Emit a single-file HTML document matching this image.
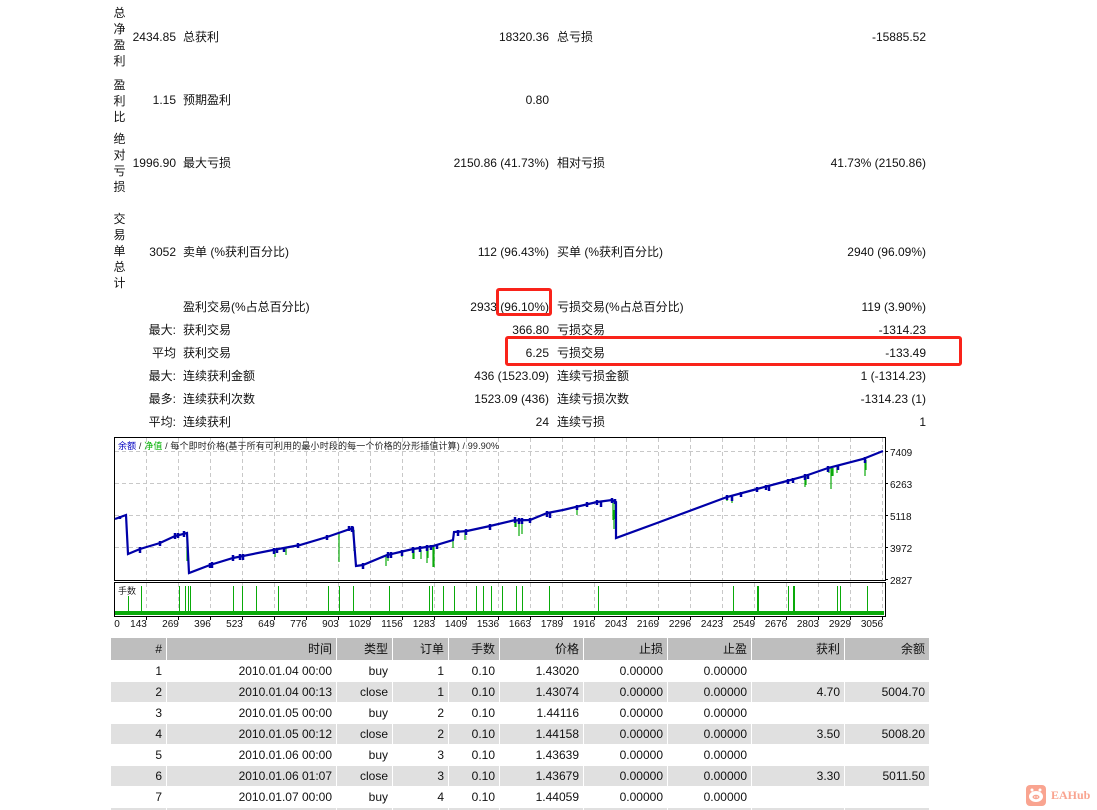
<!DOCTYPE html>
<html lang="zh">
<head>
<meta charset="utf-8">
<title>Report</title>
<style>
html,body{margin:0;padding:0;background:#fff;}
body{width:1097px;height:810px;overflow:hidden;position:relative;font:12px/16px "Liberation Sans","Noto Sans CJK SC",sans-serif;color:#111;}
.t{position:absolute;white-space:nowrap;height:16px;line-height:16px;}
.r{text-align:right;}
.v{position:absolute;width:14px;left:112.5px;text-align:center;line-height:16px;}
.box{position:absolute;border:3px solid #f9231a;border-radius:3px;box-sizing:border-box;}
svg{position:absolute;left:0;top:0;}
.c{position:absolute;height:20px;line-height:21px;text-align:right;box-sizing:border-box;padding-right:4px;white-space:nowrap;}
.hb{background:#bebebe;height:22px;line-height:23px;}
.gb{background:#e0e0e0;}
.wm{position:absolute;left:1051px;top:786px;font:bold 12px/18px "Liberation Serif",serif;color:#f9a490;}
</style>
</head>
<body>
<!-- summary -->
<div class="v" style="top:5px">总<br>净<br>盈<br>利</div>
<div class="t r" style="right:921px;top:29px">2434.85</div><div class="t" style="left:183px;top:29px">总获利</div><div class="t r" style="right:548px;top:29px">18320.36</div><div class="t" style="left:557px;top:29px">总亏损</div><div class="t r" style="right:171px;top:29px">-15885.52</div>
<div class="v" style="top:77px">盈<br>利<br>比</div>
<div class="t r" style="right:921px;top:92px">1.15</div><div class="t" style="left:183px;top:92px">预期盈利</div><div class="t r" style="right:548px;top:92px">0.80</div>
<div class="v" style="top:131px">绝<br>对<br>亏<br>损</div>
<div class="t r" style="right:921px;top:155px">1996.90</div><div class="t" style="left:183px;top:155px">最大亏损</div><div class="t r" style="right:548px;top:155px">2150.86 (41.73%)</div><div class="t" style="left:557px;top:155px">相对亏损</div><div class="t r" style="right:171px;top:155px">41.73% (2150.86)</div>
<div class="v" style="top:211px">交<br>易<br>单<br>总<br>计</div>
<div class="t r" style="right:921px;top:244px">3052</div><div class="t" style="left:183px;top:244px">卖单 (%获利百分比)</div><div class="t r" style="right:548px;top:244px">112 (96.43%)</div><div class="t" style="left:557px;top:244px">买单 (%获利百分比)</div><div class="t r" style="right:171px;top:244px">2940 (96.09%)</div>
<div class="t" style="left:183px;top:299px">盈利交易(%占总百分比)</div><div class="t r" style="right:548px;top:299px">2933 (96.10%)</div><div class="t" style="left:557px;top:299px">亏损交易(%占总百分比)</div><div class="t r" style="right:171px;top:299px">119 (3.90%)</div>
<div class="t r" style="right:921px;top:322px">最大:</div><div class="t" style="left:183px;top:322px">获利交易</div><div class="t r" style="right:548px;top:322px">366.80</div><div class="t" style="left:557px;top:322px">亏损交易</div><div class="t r" style="right:171px;top:322px">-1314.23</div>
<div class="t r" style="right:921px;top:345px">平均</div><div class="t" style="left:183px;top:345px">获利交易</div><div class="t r" style="right:548px;top:345px">6.25</div><div class="t" style="left:557px;top:345px">亏损交易</div><div class="t r" style="right:171px;top:345px">-133.49</div>
<div class="t r" style="right:921px;top:368px">最大:</div><div class="t" style="left:183px;top:368px">连续获利金额</div><div class="t r" style="right:548px;top:368px">436 (1523.09)</div><div class="t" style="left:557px;top:368px">连续亏损金额</div><div class="t r" style="right:171px;top:368px">1 (-1314.23)</div>
<div class="t r" style="right:921px;top:391px">最多:</div><div class="t" style="left:183px;top:391px">连续获利次数</div><div class="t r" style="right:548px;top:391px">1523.09 (436)</div><div class="t" style="left:557px;top:391px">连续亏损次数</div><div class="t r" style="right:171px;top:391px">-1314.23 (1)</div>
<div class="t r" style="right:921px;top:414px">平均:</div><div class="t" style="left:183px;top:414px">连续获利</div><div class="t r" style="right:548px;top:414px">24</div><div class="t" style="left:557px;top:414px">连续亏损</div><div class="t r" style="right:171px;top:414px">1</div>

<div class="box" style="left:496px;top:288px;width:56px;height:28px"></div>
<div class="box" style="left:505px;top:336px;width:457px;height:30px"></div>

<!-- chart -->
<svg width="1097" height="640" viewBox="0 0 1097 640" font-family="'Liberation Sans','Noto Sans CJK SC',sans-serif">
<g stroke="#c8c8c8" stroke-width="1" stroke-dasharray="4 3" fill="none" shape-rendering="crispEdges">
<path d="M115 451.5H884M115 483.5H884M115 515.5H884M115 547.5H884"/>
<path d="M146.500 438V580M178.500 438V580M210.500 438V580M242.500 438V580M274.500 438V580M306.500 438V580M338.500 438V580M370.500 438V580M402.500 438V580M434.500 438V580M466.500 438V580M498.500 438V580M530.500 438V580M562.500 438V580M594.500 438V580M626.500 438V580M658.500 438V580M690.500 438V580M722.500 438V580M754.500 438V580M786.500 438V580M818.500 438V580M850.500 438V580M882.500 438V580"/>
<path d="M146.500 583V611M178.500 583V611M210.500 583V611M242.500 583V611M274.500 583V611M306.500 583V611M338.500 583V611M370.500 583V611M402.500 583V611M434.500 583V611M466.500 583V611M498.500 583V611M530.500 583V611M562.500 583V611M594.500 583V611M626.500 583V611M658.500 583V611M690.500 583V611M722.500 583V611M754.500 583V611M786.500 583V611M818.500 583V611M850.500 583V611M882.500 583V611"/>
</g>
<rect x="114.500" y="437.500" width="771" height="143" fill="none" stroke="#000" shape-rendering="crispEdges"/>
<rect x="114.500" y="582.500" width="771" height="34" fill="none" stroke="#000" shape-rendering="crispEdges"/>
<!-- equity spikes -->
<g stroke="#0aaa0a" stroke-width="1.200" fill="none">
<path d="M187 533V561M275 550V557M286 548V555M339 533V562M354 530V551M386 555V566M388 555V561M402 552V557M413 550V559M414 550V559M421 550V559M427 548V563M428 548V558M433 547V567M434 547V567M453 540V548M465 532V540M516 521V527"/>
<path d="M515 521V527M519 521V536M522 521V534M577 507V515M550 513V517M613 500V520M614 510V529M615 502V519M727 497V501M732 497V503M805 477V487M806 477V485M829 468V473M831 468V489M832 468V476M833 468V476M837 467V473M865 460V476M866 460V470"/>
</g>
<!-- balance -->
<polyline fill="none" stroke="#0000a8" stroke-width="2.200" stroke-linejoin="miter" points="115,519 126,515 128,554 140,549 160,543 175,536 187,533 189,573 210,565 233,558 273,550 300,545 327,537 353,528 356,566 363,565 387,555 413,549 433,546 453,540 454,532 467,531 490,526 513,520.500 530,520 547,513 563,510 597,502 612,500 616,502 616,538 657,523 727,497 757,489 787,481 805,476 828,468 863,459 883,451"/>
<g stroke="#0000a8" stroke-width="2.500" fill="none">
<path d="M120 516V519M140 547V553M160 541V546M175 533V539M178 533V538M184 531V537M210 563V568M212 562V568M233 555V561M240 554V560M243 554V560M274 548V554M277 548V553M284 547V552M298 543V548M327 535V540M349 526V531M352 526V532M363 563V569M388 552V558M391 552V558M402 550V556M413 547V553M420 546V552M427 545V551M431 545V550M437 544V549M458 530V536M466 529V535M490 524V530M515 517V523M519 518V524M522 518V524M530 518V523M547 511V517M550 512V518M577 505V510M587 502V507M597 500V505M601 502V507M612 498V503M615 499V504M727 495V500M732 495V501M741 492V497M757 487V492M766 485V490M769 485V491M788 479V484M793 478V483M805 474V480M808 474V479M828 466V472M838 465V470M865 457V463"/>
</g>
<!-- lots -->
<g fill="#0aaa0a" shape-rendering="crispEdges">
<rect x="115" y="611" width="769" height="4"/>
<rect x="128" y="596" width="1" height="15"/><rect x="141" y="586" width="1" height="25"/><rect x="179" y="586" width="1" height="25"/><rect x="185" y="586" width="1" height="25"/><rect x="188" y="586" width="1" height="25"/><rect x="190" y="586" width="1" height="25"/><rect x="233" y="586" width="1" height="25"/><rect x="242" y="586" width="1" height="25"/><rect x="256" y="586" width="1" height="25"/><rect x="278" y="586" width="1" height="25"/><rect x="328" y="586" width="1" height="25"/><rect x="339" y="586" width="1" height="25"/><rect x="353" y="586" width="1" height="25"/><rect x="389" y="586" width="1" height="25"/><rect x="429" y="586" width="1" height="25"/><rect x="432" y="586" width="1" height="25"/><rect x="443" y="586" width="1" height="25"/><rect x="454" y="586" width="1" height="25"/><rect x="476" y="586" width="1" height="25"/><rect x="483" y="586" width="1" height="25"/><rect x="491" y="586" width="1" height="25"/><rect x="502" y="586" width="1" height="25"/><rect x="516" y="586" width="1" height="25"/><rect x="522" y="586" width="1" height="25"/><rect x="549" y="586" width="1" height="25"/><rect x="598" y="586" width="1" height="25"/><rect x="733" y="586" width="1" height="25"/><rect x="757" y="586" width="2" height="25"/><rect x="788" y="586" width="1" height="25"/><rect x="793" y="586" width="2" height="25"/><rect x="837" y="586" width="1" height="25"/><rect x="840" y="586" width="1" height="25"/><rect x="867" y="586" width="1" height="25"/>
</g>
<path d="M885 451.500H888M885 483.500H888M885 515.500H888M885 547.500H888M885 579.500H888M146.500 617V620M178.500 617V620M210.500 617V620M242.500 617V620M274.500 617V620M306.500 617V620M338.500 617V620M370.500 617V620M402.500 617V620M434.500 617V620M466.500 617V620M498.500 617V620M530.500 617V620M562.500 617V620M594.500 617V620M626.500 617V620M658.500 617V620M690.500 617V620M722.500 617V620M754.500 617V620M786.500 617V620M818.500 617V620M850.500 617V620M882.500 617V620" stroke="#000" fill="none" shape-rendering="crispEdges"/>
<text x="118" y="449" font-size="9" textLength="381" lengthAdjust="spacing" fill="#222"><tspan fill="#0000c0">余额</tspan> / <tspan fill="#00b000">净值</tspan> / 每个即时价格(基于所有可利用的最小时段的每一个价格的分形插值计算) / 99.90%</text>
<text x="118" y="594" font-size="9" fill="#222">手数</text>
<g font-size="10" fill="#111">
<text x="890" y="456">7409</text><text x="890" y="488">6263</text><text x="890" y="520">5118</text><text x="890" y="552">3972</text><text x="890" y="584">2827</text>
</g>
<g font-size="10" fill="#111" text-anchor="middle">
<text x="117" y="627">0</text><text x="138.500" y="627">143</text><text x="170.500" y="627">269</text><text x="202.500" y="627">396</text><text x="234.500" y="627">523</text><text x="266.500" y="627">649</text><text x="298.500" y="627">776</text><text x="330.500" y="627">903</text><text x="360" y="627">1029</text><text x="392" y="627">1156</text><text x="424" y="627">1283</text><text x="456" y="627">1409</text><text x="488" y="627">1536</text><text x="520" y="627">1663</text><text x="552" y="627">1789</text><text x="584" y="627">1916</text><text x="616" y="627">2043</text><text x="648" y="627">2169</text><text x="680" y="627">2296</text><text x="712" y="627">2423</text><text x="744" y="627">2549</text><text x="776" y="627">2676</text><text x="808" y="627">2803</text><text x="840" y="627">2929</text><text x="872" y="627">3056</text>
</g>
</svg>

<!-- table header -->
<div class="c hb" style="left:111px;top:638px;width:55px">#</div><div class="c hb" style="left:167px;top:638px;width:169px">时间</div><div class="c hb" style="left:337px;top:638px;width:55px">类型</div><div class="c hb" style="left:393px;top:638px;width:55px">订单</div><div class="c hb" style="left:449px;top:638px;width:50px">手数</div><div class="c hb" style="left:500px;top:638px;width:83px">价格</div><div class="c hb" style="left:584px;top:638px;width:83px">止损</div><div class="c hb" style="left:668px;top:638px;width:83px">止盈</div><div class="c hb" style="left:752px;top:638px;width:92px">获利</div><div class="c hb" style="left:845px;top:638px;width:84px">余额</div>
<!-- row 1 -->
<div class="c" style="left:111px;top:661px;width:55px">1</div><div class="c" style="left:167px;top:661px;width:169px">2010.01.04 00:00</div><div class="c" style="left:337px;top:661px;width:55px">buy</div><div class="c" style="left:393px;top:661px;width:55px">1</div><div class="c" style="left:449px;top:661px;width:50px">0.10</div><div class="c" style="left:500px;top:661px;width:83px">1.43020</div><div class="c" style="left:584px;top:661px;width:83px">0.00000</div><div class="c" style="left:668px;top:661px;width:83px">0.00000</div>
<!-- row 2 -->
<div class="c gb" style="left:111px;top:682px;width:55px">2</div><div class="c gb" style="left:167px;top:682px;width:169px">2010.01.04 00:13</div><div class="c gb" style="left:337px;top:682px;width:55px">close</div><div class="c gb" style="left:393px;top:682px;width:55px">1</div><div class="c gb" style="left:449px;top:682px;width:50px">0.10</div><div class="c gb" style="left:500px;top:682px;width:83px">1.43074</div><div class="c gb" style="left:584px;top:682px;width:83px">0.00000</div><div class="c gb" style="left:668px;top:682px;width:83px">0.00000</div><div class="c gb" style="left:752px;top:682px;width:92px">4.70</div><div class="c gb" style="left:845px;top:682px;width:84px">5004.70</div>
<!-- row 3 -->
<div class="c" style="left:111px;top:703px;width:55px">3</div><div class="c" style="left:167px;top:703px;width:169px">2010.01.05 00:00</div><div class="c" style="left:337px;top:703px;width:55px">buy</div><div class="c" style="left:393px;top:703px;width:55px">2</div><div class="c" style="left:449px;top:703px;width:50px">0.10</div><div class="c" style="left:500px;top:703px;width:83px">1.44116</div><div class="c" style="left:584px;top:703px;width:83px">0.00000</div><div class="c" style="left:668px;top:703px;width:83px">0.00000</div>
<!-- row 4 -->
<div class="c gb" style="left:111px;top:724px;width:55px">4</div><div class="c gb" style="left:167px;top:724px;width:169px">2010.01.05 00:12</div><div class="c gb" style="left:337px;top:724px;width:55px">close</div><div class="c gb" style="left:393px;top:724px;width:55px">2</div><div class="c gb" style="left:449px;top:724px;width:50px">0.10</div><div class="c gb" style="left:500px;top:724px;width:83px">1.44158</div><div class="c gb" style="left:584px;top:724px;width:83px">0.00000</div><div class="c gb" style="left:668px;top:724px;width:83px">0.00000</div><div class="c gb" style="left:752px;top:724px;width:92px">3.50</div><div class="c gb" style="left:845px;top:724px;width:84px">5008.20</div>
<!-- row 5 -->
<div class="c" style="left:111px;top:745px;width:55px">5</div><div class="c" style="left:167px;top:745px;width:169px">2010.01.06 00:00</div><div class="c" style="left:337px;top:745px;width:55px">buy</div><div class="c" style="left:393px;top:745px;width:55px">3</div><div class="c" style="left:449px;top:745px;width:50px">0.10</div><div class="c" style="left:500px;top:745px;width:83px">1.43639</div><div class="c" style="left:584px;top:745px;width:83px">0.00000</div><div class="c" style="left:668px;top:745px;width:83px">0.00000</div>
<!-- row 6 -->
<div class="c gb" style="left:111px;top:766px;width:55px">6</div><div class="c gb" style="left:167px;top:766px;width:169px">2010.01.06 01:07</div><div class="c gb" style="left:337px;top:766px;width:55px">close</div><div class="c gb" style="left:393px;top:766px;width:55px">3</div><div class="c gb" style="left:449px;top:766px;width:50px">0.10</div><div class="c gb" style="left:500px;top:766px;width:83px">1.43679</div><div class="c gb" style="left:584px;top:766px;width:83px">0.00000</div><div class="c gb" style="left:668px;top:766px;width:83px">0.00000</div><div class="c gb" style="left:752px;top:766px;width:92px">3.30</div><div class="c gb" style="left:845px;top:766px;width:84px">5011.50</div>
<!-- row 7 -->
<div class="c" style="left:111px;top:787px;width:55px">7</div><div class="c" style="left:167px;top:787px;width:169px">2010.01.07 00:00</div><div class="c" style="left:337px;top:787px;width:55px">buy</div><div class="c" style="left:393px;top:787px;width:55px">4</div><div class="c" style="left:449px;top:787px;width:50px">0.10</div><div class="c" style="left:500px;top:787px;width:83px">1.44059</div><div class="c" style="left:584px;top:787px;width:83px">0.00000</div><div class="c" style="left:668px;top:787px;width:83px">0.00000</div>
<!-- row 8 sliver -->
<div class="c gb" style="left:111px;top:808px;width:55px;height:2px"></div><div class="c gb" style="left:167px;top:808px;width:169px;height:2px"></div><div class="c gb" style="left:337px;top:808px;width:55px;height:2px"></div><div class="c gb" style="left:393px;top:808px;width:55px;height:2px"></div><div class="c gb" style="left:449px;top:808px;width:50px;height:2px"></div><div class="c gb" style="left:500px;top:808px;width:83px;height:2px"></div><div class="c gb" style="left:584px;top:808px;width:83px;height:2px"></div><div class="c gb" style="left:668px;top:808px;width:83px;height:2px"></div><div class="c gb" style="left:752px;top:808px;width:92px;height:2px"></div><div class="c gb" style="left:845px;top:808px;width:84px;height:2px"></div>

<!-- watermark -->
<svg style="left:1026px;top:785px" width="20" height="21" viewBox="0 0 20 21">
<rect x="0" y="0" width="20" height="21" rx="4" fill="#f9a490"/>
<circle cx="6" cy="5" r="1.500" fill="#fff"/><circle cx="14" cy="5" r="1.500" fill="#fff"/>
<ellipse cx="10" cy="11.500" rx="7" ry="5.500" fill="#fff"/>
<ellipse cx="10" cy="12" rx="3.500" ry="2.200" fill="#f9a490"/>
<circle cx="8.800" cy="12" r=".7" fill="#fff"/><circle cx="11.200" cy="12" r=".7" fill="#fff"/>
</svg>
<div class="wm">EAHub</div>
</body>
</html>
